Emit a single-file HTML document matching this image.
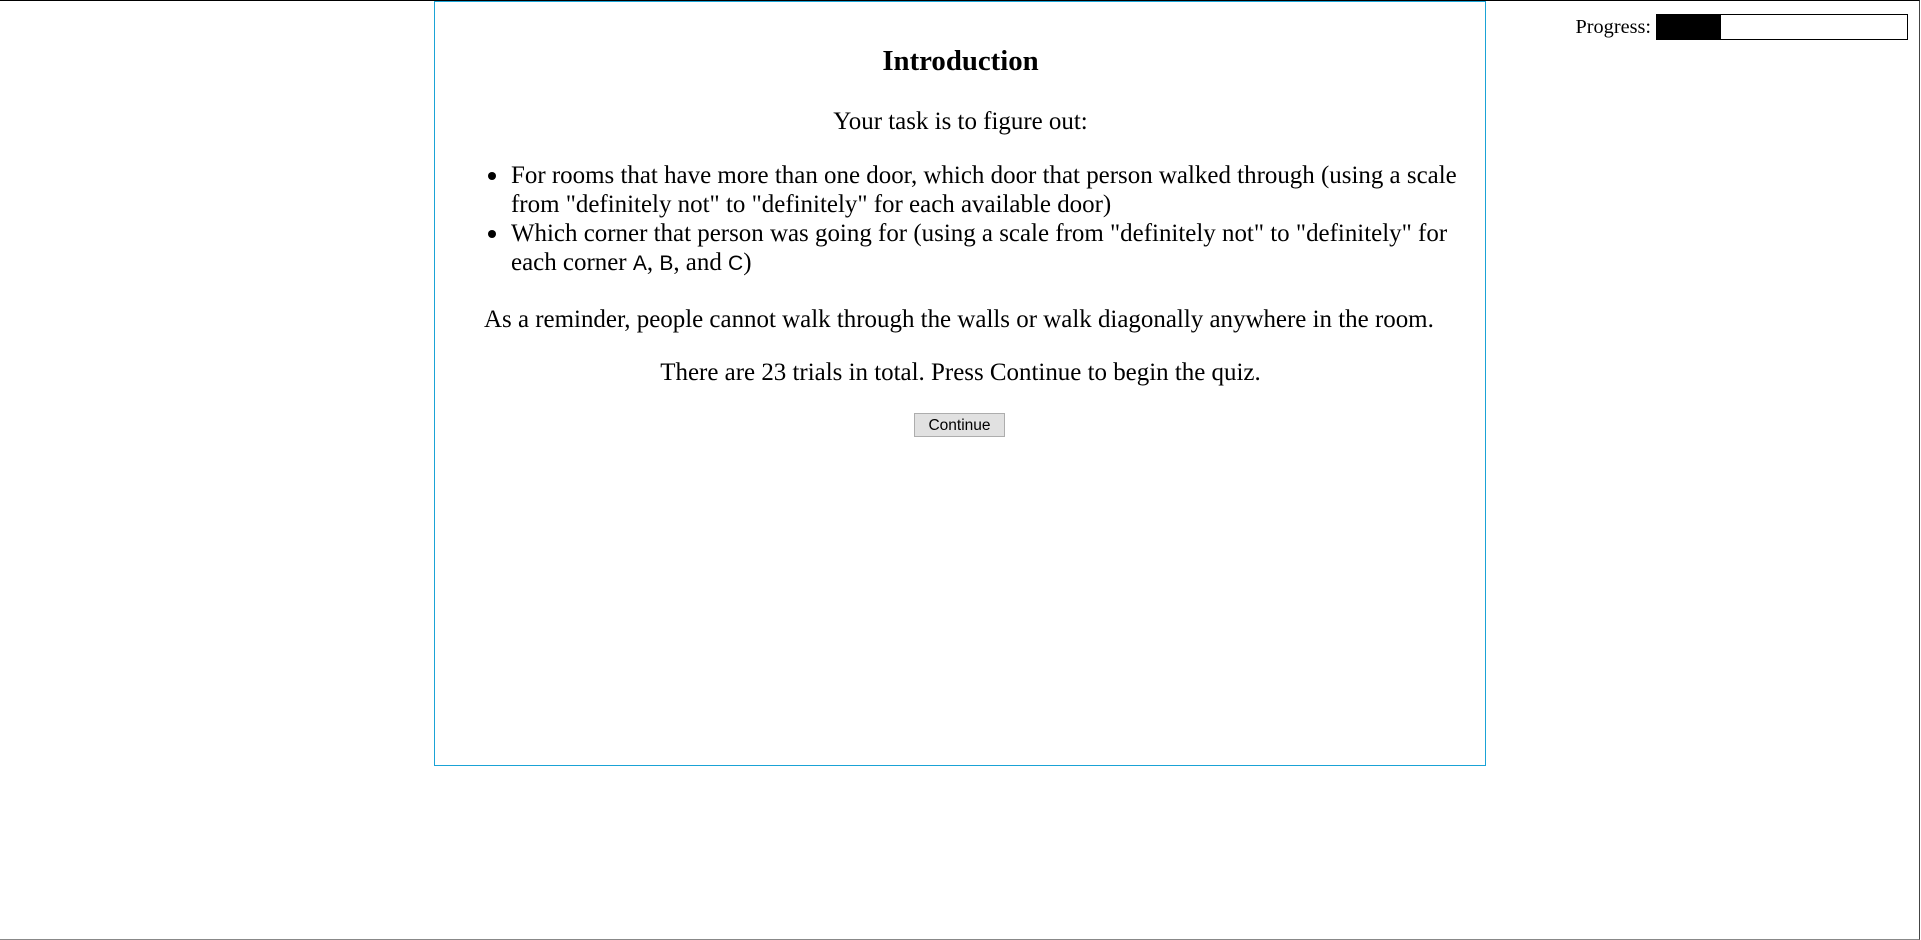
<!DOCTYPE html>
<html><head><meta charset="utf-8"><style>
html,body{margin:0;padding:0;background:#fff;width:1921px;height:940px;overflow:hidden;position:relative;font-family:"Liberation Serif",serif;color:#000}
.frame{position:absolute;left:0;top:0;width:1919px;height:938px;border-top:1px solid #000;border-right:1px solid #444;border-bottom:1px solid #888}
.box{position:absolute;left:434px;top:1px;width:1050px;height:763px;border:1px solid #1aa3d6;}
.t{position:absolute;white-space:nowrap;font-size:24.95px;line-height:29px}
.c{left:434px;width:1053px;text-align:center}
h2{position:absolute;margin:0;left:434px;width:1053px;text-align:center;top:45px;font-size:28.8px;line-height:32px;font-weight:bold}
.dot{position:absolute;width:8px;height:8px;border-radius:50%;background:#000}
.sans{font-family:"Liberation Sans",sans-serif;font-size:21px}
.btn{position:absolute;left:914px;top:413px;width:89px;height:22px;background:#e1e1e1;border:1px solid #adadad;font-family:"Liberation Sans",sans-serif;font-size:15.5px;line-height:23px;text-align:center}
.prog{position:absolute;right:270px;top:15px;font-size:20.3px;line-height:24px}
.bar{position:absolute;left:1656px;top:14px;width:250px;height:24px;border:1px solid #000;background:#fff}
.fill{position:absolute;left:0;top:0;width:64px;height:24px;background:#000}
</style></head><body>
<div class="frame"></div>
<div class="box"></div>
<h2>Introduction</h2>
<div class="t c" style="top:107px">Your task is to figure out:</div>
<div class="dot" style="left:488px;top:172px"></div>
<div class="t" style="left:511px;top:161px">For rooms that have more than one door, which door that person walked through (using a scale</div>
<div class="t" style="left:511px;top:190px">from "definitely not" to "definitely" for each available door)</div>
<div class="dot" style="left:488px;top:230px"></div>
<div class="t" style="left:511px;top:219px">Which corner that person was going for (using a scale from "definitely not" to "definitely" for</div>
<div class="t" style="left:511px;top:248px">each corner <span class="sans">A</span>, <span class="sans">B</span>, and <span class="sans">C</span>)</div>
<div class="t" style="left:484px;top:305px">As a reminder, people cannot walk through the walls or walk diagonally anywhere in the room.</div>
<div class="t c" style="top:358px">There are 23 trials in total. Press Continue to begin the quiz.</div>
<div class="btn">Continue</div>
<div class="prog">Progress:</div>
<div class="bar"><div class="fill"></div></div>
</body></html>
